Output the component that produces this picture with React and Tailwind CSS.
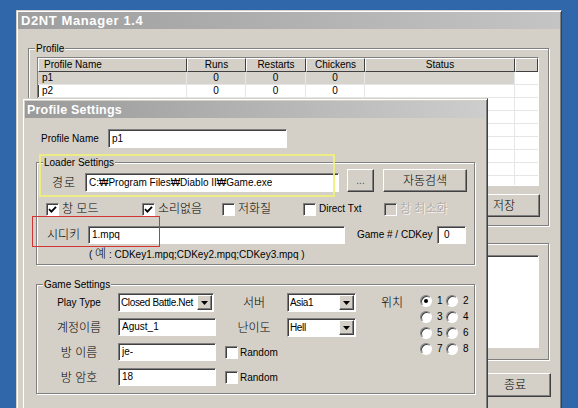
import React from 'react';

const raised =
  'border border-t-white border-l-white border-r-[#404040] border-b-[#404040] shadow-[inset_-1px_-1px_0_#808080]';
const sunken =
  'border border-t-[#808080] border-l-[#808080] border-r-white border-b-white shadow-[inset_1px_1px_0_#404040]';
const ko = 'text-[12px] leading-[14px] font-light';

function Button({ children, className = '' }) {
  return (
    <div className={`bg-[#d4d0c8] ${raised} flex items-center justify-center ${className}`}>
      {children}
    </div>
  );
}

function Input({ value, className = '' }) {
  return (
    <div className={`bg-white ${sunken} flex items-center pl-[3px] ${className}`}>
      <span className="truncate">{value}</span>
    </div>
  );
}

function Combo({ value, className = '' }) {
  return (
    <div className={`bg-white ${sunken} h-[19px] flex items-center ${className}`}>
      <span className="flex-1 pl-[2px] whitespace-nowrap overflow-hidden tracking-[-0.35px]">{value}</span>
      <span className={`w-[15px] h-[15px] mr-[1px] shrink-0 bg-[#d4d0c8] ${raised} flex items-center justify-center`}>
        <svg width="7" height="4" viewBox="0 0 7 4">
          <path d="M0 0h7L3.5 4z" fill="#000" />
        </svg>
      </span>
    </div>
  );
}

function Checkbox({ checked, disabled }) {
  return (
    <span
      className={`w-[13px] h-[13px] shrink-0 ${sunken} ${
        disabled ? 'bg-[#d4d0c8]' : 'bg-white'
      } flex items-center justify-center`}
    >
      {checked && (
        <svg width="9" height="9" viewBox="0 0 9 9">
          <path d="M1 4.2L3.4 6.6L8 1.8" stroke="#000" strokeWidth="1.8" fill="none" />
        </svg>
      )}
    </span>
  );
}

function Radio({ checked }) {
  return (
    <span className="w-[12px] h-[12px] shrink-0 rounded-full border border-t-[#808080] border-l-[#808080] border-r-white border-b-white bg-white shadow-[inset_1px_1px_0_#404040] flex items-center justify-center">
      {checked && <span className="w-[4px] h-[4px] rounded-full bg-black" />}
    </span>
  );
}

function GroupBox({ title, className = '', children }) {
  return (
    <div
      className={`relative border border-[#808080] shadow-[1px_1px_0_#fff,inset_1px_1px_0_#fff] ${className}`}
    >
      {title && (
        <span className="absolute -top-[7px] left-[6px] px-[1px] bg-[#d4d0c8] leading-[13px]">
          {title}
        </span>
      )}
      {children}
    </div>
  );
}

const colClass = ['w-[149px]', 'w-[59px]', 'w-[60px]', 'w-[59px]', 'w-[150px]'];

function ProfileList() {
  const headers = ['Profile Name', 'Runs', 'Restarts', 'Chickens', 'Status'];
  const rows = [
    ['p1', '0', '0', '0', ''],
    ['p2', '0', '0', '0', ''],
    ['', '', '', '', ''],
    ['', '', '', '', ''],
    ['', '', '', '', ''],
    ['', '', '', '', ''],
    ['', '', '', '', ''],
    ['', '', '', '', ''],
    ['', '', '', '', ''],
  ];
  return (
    <div className={`bg-white ${sunken} w-[502px] h-[129px] overflow-hidden flex flex-col`}>
      <div className="flex h-[14px] shrink-0">
        {headers.map((h, i) => (
          <div
            key={h}
            className={`${colClass[i]} shrink-0 bg-[#d4d0c8] ${raised} shadow-none flex items-center ${
              i === 0 ? 'pl-[5px]' : 'justify-center'
            } leading-[12px]`}
          >
            {h}
          </div>
        ))}
        <div className={`flex-1 bg-[#d4d0c8] ${raised} shadow-none`} />
      </div>
      {rows.map((r, ri) => (
        <div key={ri} className="flex h-[13px] shrink-0 border-b border-[#e6e6e6]">
          {r.map((c, ci) => (
            <div
              key={ci}
              className={`${colClass[ci]} shrink-0 border-r border-[#e6e6e6] flex items-center leading-[12px] ${
                ci === 0 ? 'pl-[4px]' : 'justify-center'
              } ${ri === 0 ? 'bg-[#d6d3cd]' : ''}`}
            >
              {c}
            </div>
          ))}
          <div className="flex-1" />
        </div>
      ))}
    </div>
  );
}

function MainWindow() {
  return (
    <div className="absolute left-[16px] top-[10px] w-[546px] h-[420px] bg-[#d4d0c8] border border-t-[#d4d0c8] border-l-[#d4d0c8] border-r-[#404040] border-b-[#404040] shadow-[inset_1px_1px_0_#fff,inset_-1px_-1px_0_#808080] p-[1px]">
      <div className="h-[17px] bg-gradient-to-r from-[#9e9e9e] to-[#c4c4c4] flex items-center pl-[3px]">
        <span className="text-white font-bold text-[13px] tracking-[0.6px] leading-[14px]">D2NT Manager 1.4</span>
      </div>
      <div className="flex flex-col pl-[10px] pr-[11px] pt-[19px]">
        <GroupBox title="Profile" className="h-[178px] flex flex-col pl-[8px] pt-[8px]">
          <ProfileList />
          <div className="flex justify-end pr-[8px] mt-[8px]">
            <Button className={`w-[72px] h-[23px] ${ko}`}>저장</Button>
          </div>
        </GroupBox>
        <GroupBox className="h-[117px] mt-[17px] pl-[8px] pr-[9px] pt-[11px]">
          <div className={`bg-white ${sunken} h-[93px]`} />
        </GroupBox>
        <div className="flex justify-end mt-[13px] -mr-[2px]">
          <Button className={`w-[72px] h-[24px] ${ko}`}>종료</Button>
        </div>
      </div>
    </div>
  );
}

function CheckItem({ checked, disabled, label, className = '' }) {
  return (
    <div className={`flex items-center gap-[3px] ${className}`}>
      <Checkbox checked={checked} disabled={disabled} />
      <span
        className={`${ko} ${disabled ? 'text-[#a0a0a0] [text-shadow:1px_1px_0_#fff]' : ''}`}
      >
        {label}
      </span>
    </div>
  );
}

function ProfileSettings() {
  return (
    <div className="absolute left-[22px] top-[98px] w-[466px] h-[320px] bg-[#d4d0c8] border border-t-[#d4d0c8] border-l-[#d4d0c8] border-r-[#404040] border-b-[#404040] shadow-[inset_1px_1px_0_#fff,inset_-1px_-1px_0_#808080] p-[2px]">
      <div className="h-[17px] bg-gradient-to-r from-[#9a9a9a] to-[#cdcdcd] flex items-center pl-[2px]">
        <span className="text-white font-bold text-[12.5px] tracking-[0.2px] leading-[14px]">Profile Settings</span>
      </div>

      {/* Profile name */}
      <div className="flex items-center mt-[11px] pl-[16px]">
        <span className="w-[67px]">Profile Name</span>
        <Input value="p1" className="w-[179px] h-[19px]" />
      </div>

      {/* Loader Settings */}
      <GroupBox title="Loader Settings" className="ml-[11px] mt-[14px] w-[439px] h-[103px]">
        <div className="flex items-end pt-[6px] pl-[15px]">
          <span className={`w-[33px] ${ko} tracking-[1px] pb-[2px]`}>경로</span>
          <Input value="C:₩Program Files₩Diablo II₩Game.exe" className="w-[254px] h-[19px] bg-[#d4d0c8]" />
          <Button className="ml-[8px] w-[27px] h-[23px] text-[#505050]">...</Button>
          <Button className={`ml-[9px] w-[84px] h-[23px] ${ko}`}>자동검색</Button>
        </div>
        <div className="grid grid-cols-[96px_80px_81px_81px_1fr] mt-[10px] pl-[9px] h-[13px]">
          <CheckItem checked label="창 모드" />
          <CheckItem checked label="소리없음" />
          <CheckItem label="저화질" />
          <div className="flex items-center gap-[3px]">
            <Checkbox />
            <span>Direct Txt</span>
          </div>
          <CheckItem disabled label="창 최소화" />
        </div>
        <div className="flex items-center mt-[11px] pl-[10px]">
          <span className={`w-[41px] ${ko}`}>시디키</span>
          <Input value="1.mpq" className="w-[257px] h-[18px]" />
          <span className="ml-[12px] w-[80px]">Game # / CDKey</span>
          <Input value="0" className="w-[29px] h-[18px] pl-[6px]" />
        </div>
        <div className="mt-[3px] pl-[52px] leading-[13px]">
          ( <span className={ko}>예</span> : CDKey1.mpq;CDKey2.mpq;CDKey3.mpq )
        </div>
      </GroupBox>

      {/* Game Settings */}
      <GroupBox title="Game Settings" className="ml-[11px] mt-[19px] w-[439px] h-[110px]">
        <div className="flex items-start pt-[8px] pl-[10px]">
          <div className="grid grid-cols-[71px_98px_71px_69px] auto-rows-[19px] gap-y-[6px]">
            <span className="pr-[7px] flex items-center justify-center">Play Type</span>
            <Combo value="Closed Battle.Net" className="w-[96px]" />
            <span className={`pl-[5px] flex items-center justify-center ${ko}`}>서버</span>
            <Combo value="Asia1" className="w-[69px]" />

            <span className={`pr-[7px] flex items-center justify-center ${ko}`}>계정이름</span>
            <Input value="Agust_1" className="w-[98px] h-[18px]" />
            <span className={`pl-[5px] flex items-center justify-center ${ko}`}>난이도</span>
            <Combo value="Hell" className="w-[69px]" />

            <span className={`pr-[7px] flex items-center justify-center ${ko}`}>방 이름</span>
            <Input value="je-" className="w-[98px] h-[18px]" />
            <div className="flex items-center gap-[2px] pl-[9px]">
              <Checkbox />
              <span>Random</span>
            </div>
            <span />

            <span className={`pr-[7px] flex items-center justify-center ${ko}`}>방 암호</span>
            <Input value="18" className="w-[98px] h-[18px]" />
            <div className="flex items-center gap-[2px] pl-[9px]">
              <Checkbox />
              <span>Random</span>
            </div>
            <span />
          </div>
          <div className="flex items-start ml-[25px]">
            <span className={`w-[39px] h-[19px] flex items-center ${ko}`}>위치</span>
            <div className="grid grid-cols-[26px_26px] auto-rows-[16px]">
              {[1, 2, 3, 4, 5, 6, 7, 8].map((n) => (
                <div key={n} className="flex items-center gap-[5px]">
                  <Radio checked={n === 1} />
                  <span>{n}</span>
                </div>
              ))}
            </div>
          </div>
        </div>
      </GroupBox>
    </div>
  );
}

export default function App() {
  return (
    <div className="relative w-[578px] h-[408px] overflow-hidden bg-[#3066aa] font-['Liberation_Sans','Noto_Sans_CJK_KR',sans-serif] text-[10px] leading-[12px] text-black">
      <MainWindow />
      <ProfileSettings />
      {/* annotation boxes */}
      <div className="absolute left-[39px] top-[154px] w-[296px] h-[43px] border-2 border-[#eef07c]/90 pointer-events-none" />
      <div className="absolute left-[32px] top-[216px] w-[128px] h-[31px] border-[1.5px] border-[#d03434] pointer-events-none" />
    </div>
  );
}
